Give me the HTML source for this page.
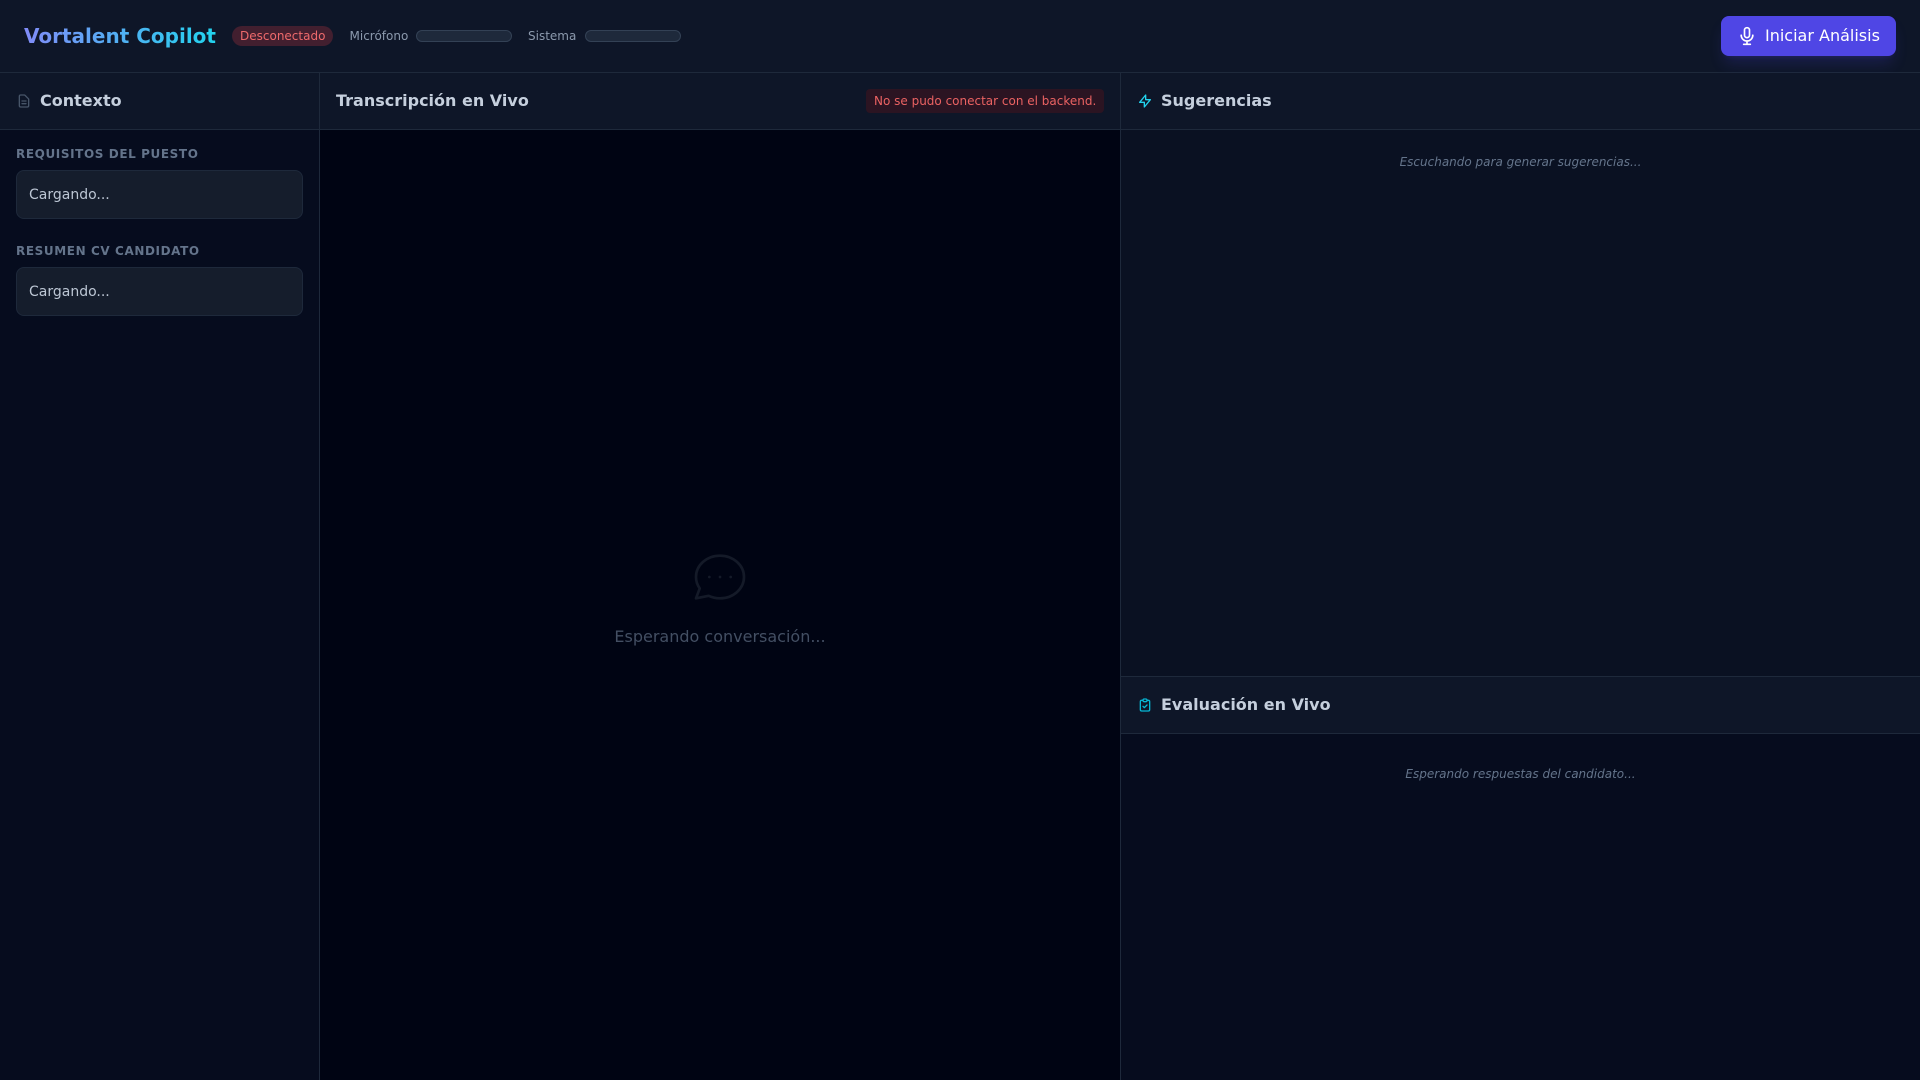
<!DOCTYPE html>
<html lang="es"><head><meta charset="utf-8"><title>Vortalent Copilot</title>
<style>
*{box-sizing:border-box;margin:0;padding:0}
html,body{width:1920px;height:1080px;overflow:hidden;background:#020617;font-family:"DejaVu Sans",sans-serif}
.a{position:absolute}
.t{position:absolute;white-space:nowrap}
.hd{position:absolute;background:#0e1628;border-bottom:1px solid #1e293b}
.ttl{font-size:16px;font-weight:700;color:#c5cfdd;line-height:24px}
.lab{font-size:12px;font-weight:700;color:#64748b;letter-spacing:.6px;line-height:16px}
.box{position:absolute;left:16px;width:287px;height:49px;background:#151d2c;border:1px solid #1e293b;border-radius:8px;font-size:14px;color:#bcc6d4;padding:14px 12px;line-height:20px}
.bar{position:absolute;top:30px;width:96px;height:12px;background:#1e293b;border:1px solid #334155;border-radius:6px}
.sm{font-size:12px;color:#8b99ad;line-height:16px}
.it{font-size:12px;font-style:italic;color:#64748b;line-height:16px;text-align:center}
svg{position:absolute;fill:none;stroke-linecap:round;stroke-linejoin:round}
</style></head><body>
<div class="a" style="left:0;top:0;width:1920px;height:73px;background:#0e1628;border-bottom:1px solid #1e293b"></div>
<div class="t" style="left:24px;top:22px;font-size:20px;font-weight:700;line-height:28px;background:linear-gradient(90deg,#818cf8,#22d3ee);background-clip:text;-webkit-background-clip:text;color:transparent">Vortalent Copilot</div>
<div class="a" style="left:232px;top:26px;width:101px;height:20px;border-radius:10px;background:#421f2f"></div>
<div class="t" style="left:240px;top:28px;font-size:12px;line-height:16px;color:#ee6a6c">Desconectado</div>
<div class="t sm" style="left:349.5px;top:28px">Micrófono</div>
<div class="bar" style="left:416px"></div>
<div class="t sm" style="left:528px;top:28px">Sistema</div>
<div class="bar" style="left:585px"></div>
<div class="a" style="left:1721px;top:16px;width:175px;height:40px;border-radius:8px;background:#4f46e5;box-shadow:0 10px 15px -3px rgba(79,70,229,.2),0 4px 6px -4px rgba(79,70,229,.2)"></div>
<svg style="left:1737px;top:26px" width="20" height="20" viewBox="0 0 24 24" stroke="#fff" stroke-width="2"><path d="M19 11a7 7 0 01-7 7m0 0a7 7 0 01-7-7m7 7v4m0 0H8m4 0h4m-4-8a3 3 0 01-3-3V5a3 3 0 116 0v6a3 3 0 01-3 3z"/></svg>
<div class="t" style="left:1765px;top:26px;font-size:16px;line-height:20px;color:#fff">Iniciar Análisis</div>

<!-- left -->
<div class="a" style="left:0;top:73px;width:320px;height:1007px;background:#060c1e;border-right:1px solid #1e293b"></div>
<div class="hd" style="left:0;top:73px;width:320px;height:57px;border-right:1px solid #1e293b"></div>
<svg style="left:16px;top:93px" width="16" height="16" viewBox="0 0 24 24" stroke="#475569" stroke-width="2"><path d="M9 12h6m-6 4h6m2 5H7a2 2 0 01-2-2V5a2 2 0 012-2h5.586a1 1 0 01.707.293l5.414 5.414a1 1 0 01.293.707V19a2 2 0 01-2 2z"/></svg>
<div class="t ttl" style="left:40px;top:89px">Contexto</div>
<div class="t lab" style="left:16px;top:146px">REQUISITOS DEL PUESTO</div>
<div class="box" style="top:170px">Cargando...</div>
<div class="t lab" style="left:16px;top:243px">RESUMEN CV CANDIDATO</div>
<div class="box" style="top:267px">Cargando...</div>

<!-- center -->
<div class="a" style="left:320px;top:73px;width:801px;height:1007px;background:#000413;border-right:1px solid #1e293b"></div>
<div class="hd" style="left:320px;top:73px;width:801px;height:57px;border-right:1px solid #1e293b"></div>
<div class="t ttl" style="left:336px;top:89px">Transcripción en Vivo</div>
<div class="a" style="left:866px;top:89px;width:238px;height:24px;border-radius:4px;background:#2b1422"></div>
<div class="t" style="left:874px;top:93px;font-size:12px;line-height:16px;color:#ea6262">No se pudo conectar con el backend.</div>
<svg style="left:688px;top:545px" width="64" height="64" viewBox="0 0 24 24" stroke="#141a28" stroke-width="1"><path d="M8 12h.01M12 12h.01M16 12h.01M21 12c0 4.418-4.03 8-9 8a9.863 9.863 0 01-4.255-.949L3 20l1.395-3.72C3.512 15.042 3 13.574 3 12c0-4.418 4.03-8 9-8s9 3.582 9 8z"/></svg>
<div class="t" style="left:320px;width:800px;top:625px;text-align:center;font-size:16px;line-height:24px;color:#434f63">Esperando conversación...</div>

<!-- right -->
<div class="a" style="left:1121px;top:73px;width:799px;height:1007px;background:#0a1122"></div>
<div class="hd" style="left:1121px;top:73px;width:799px;height:57px"></div>
<svg style="left:1137px;top:93px" width="16" height="16" viewBox="0 0 24 24" stroke="#22d3ee" stroke-width="2"><path d="M13 10V3L4 14h7v7l9-11h-7z"/></svg>
<div class="t ttl" style="left:1161px;top:89px">Sugerencias</div>
<div class="t it" style="left:1121px;width:799px;top:154px">Escuchando para generar sugerencias...</div>

<div class="a" style="left:1121px;top:676px;width:799px;height:404px;background:#060c1e;border-top:1px solid #1e293b"></div>
<div class="hd" style="left:1121px;top:677px;width:799px;height:57px"></div>
<svg style="left:1137px;top:697px" width="16" height="16" viewBox="0 0 24 24" stroke="#06b6d4" stroke-width="2"><path d="M9 5H7a2 2 0 00-2 2v12a2 2 0 002 2h10a2 2 0 002-2V7a2 2 0 00-2-2h-2M9 5a2 2 0 002 2h2a2 2 0 002-2M9 5a2 2 0 012-2h2a2 2 0 012 2m-6 9l2 2 4-4"/></svg>
<div class="t ttl" style="left:1161px;top:693px">Evaluación en Vivo</div>
<div class="t it" style="left:1121px;width:799px;top:766px">Esperando respuestas del candidato...</div>
</body></html>
